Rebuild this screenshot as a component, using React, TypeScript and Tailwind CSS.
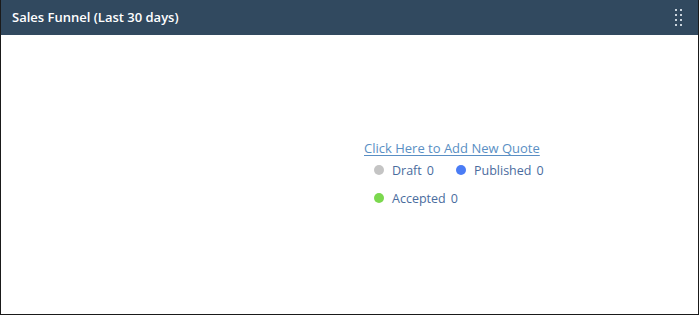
import React from 'react';

const legend = [
  { label: 'Draft', value: 0, color: 'bg-[#c4c4c4]' },
  { label: 'Published', value: 0, color: 'bg-[#4a7cf5]' },
  { label: 'Accepted', value: 0, color: 'bg-[#7bd84e]' },
];

const Grip = () => (
  <div className="grid grid-cols-2 gap-x-[3px] gap-y-[3px]">
    {Array.from({ length: 8 }).map((_, i) => (
      <span key={i} className="block w-[2px] h-[2px] bg-[#c9d3dc]" />
    ))}
  </div>
);

export default function App() {
  return (
    <div className="w-[699px] h-[315px] bg-white border-l border-r border-b border-[#1a1a1a] flex flex-col font-['Open_Sans',sans-serif]">
      {/* Header */}
      <div className="h-[35px] bg-[#31495f] flex items-center justify-between pl-[11px] pr-[16px]">
        <span className="text-white text-[13px] font-semibold">Sales Funnel (Last 30 days)</span>
        <Grip />
      </div>

      {/* Body */}
      <div className="flex-1 flex pl-[363px] pt-[104px]">
        <div className="flex flex-col">
          <a href="#" className="text-[13px] leading-[18px] text-[#5a8fc4] underline underline-offset-2">
            Click Here to Add New Quote
          </a>
          <div className="flex flex-wrap w-[180px] pl-[10px] pt-[5px] gap-y-[10px]">
            {legend.map((item) => (
              <div key={item.label} className="w-[82px] flex items-center gap-[8px] text-[12.5px] leading-[18px] text-[#4a6c9e]">
                <span className="w-[10px] h-[10px] rounded-full shrink-0 relative top-[-1px]">
                  <span className={`block w-full h-full rounded-full ${item.color}`} />
                </span>
                <span className="whitespace-nowrap">
                  {item.label}
                  <span className="ml-[5px]">{item.value}</span>
                </span>
              </div>
            ))}
          </div>
        </div>
      </div>
    </div>
  );
}
